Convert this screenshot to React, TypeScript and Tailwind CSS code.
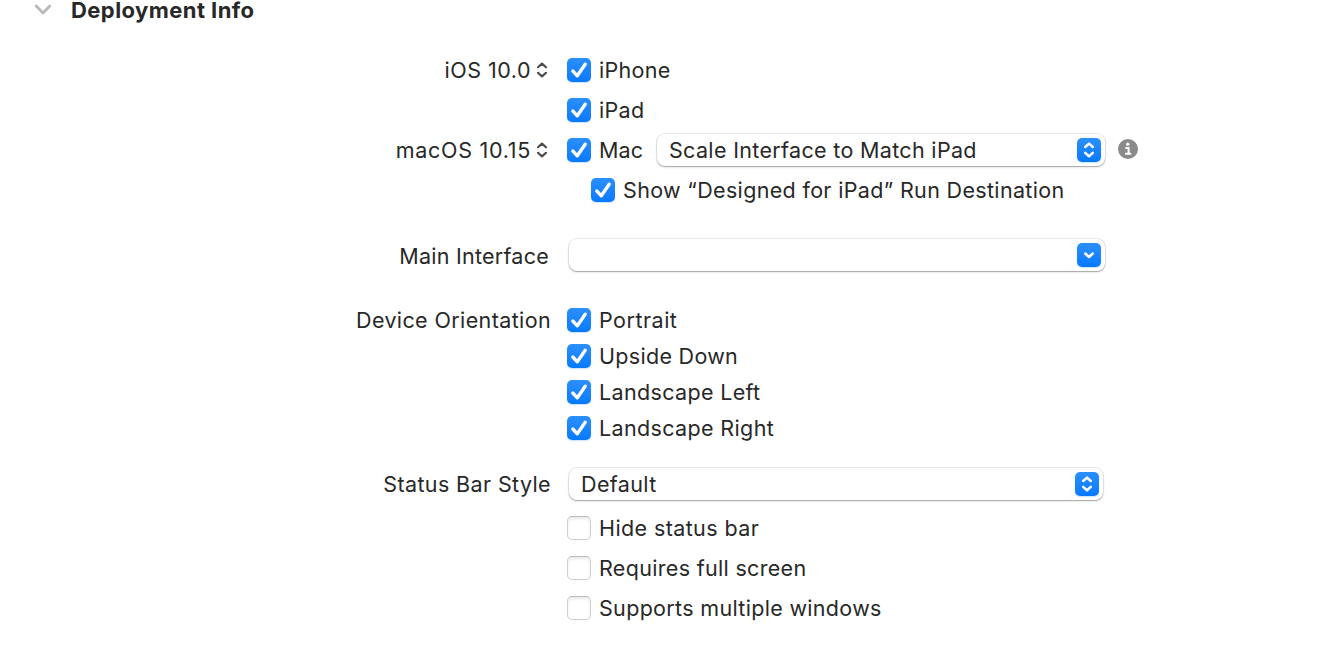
import { useState } from 'react';

function CheckBox({ initial }: { initial: boolean }) {
  const [on, setOn] = useState(initial);
  return (
    <button
      type="button"
      role="checkbox"
      aria-checked={on}
      onClick={() => setOn(!on)}
      className={
        on
          ? 'size-6 shrink-0 rounded-[5px] bg-linear-to-b from-[#2b90fd] to-[#0579ff] shadow-[0_1px_1px_rgba(0,122,255,0.22)]'
          : 'size-6 shrink-0 rounded-[5px] border border-[#d0d0d0] border-t-[#bcbcbc] bg-white shadow-[inset_0_2px_3px_rgba(0,0,0,0.09)]'
      }
    >
      {on && (
        <svg viewBox="0 0 24 24" className="block size-6" fill="none" stroke="white" strokeWidth="3.3" strokeLinecap="round" strokeLinejoin="round">
          <path d="M5.8 13 10.3 17.8 18.2 6.2" />
        </svg>
      )}
    </button>
  );
}

function Check({ label, tracking, on = true }: { label: string; tracking: string; on?: boolean }) {
  return (
    <div className="flex h-6 items-center gap-2">
      <CheckBox initial={on} />
      <span className={tracking}>{label}</span>
    </div>
  );
}

function Stepper() {
  return (
    <svg viewBox="0 0 12 16" className="h-4 w-3" fill="none" stroke="#4c4c4c" strokeWidth="2.2" strokeLinecap="round" strokeLinejoin="round">
      <path d="M2 5.2 6 1.6 10 5.2M2 10.8 6 14.4 10 10.8" />
    </svg>
  );
}

function BlueKnob({ single = false }: { single?: boolean }) {
  return (
    <span className="size-6 shrink-0 rounded-[5px] bg-linear-to-b from-[#2b90fd] to-[#0579ff] shadow-[0_1px_1px_rgba(0,122,255,0.22)]">
      <svg viewBox="0 0 24 24" className="block size-6" fill="none" stroke="white" strokeWidth="2.5" strokeLinecap="round" strokeLinejoin="round">
        <path d={single ? 'M8.3 10.5 12 14 15.7 10.5' : 'M8.2 9 12 5.6 15.8 9M8.2 14.9 12 18.3 15.8 14.9'} />
      </svg>
    </span>
  );
}

const popup =
  'flex items-center justify-between rounded-[8px] bg-white pl-3 pr-1 shadow-[0_0_0_1px_rgba(0,0,0,0.07),0_1px_1px_rgba(0,0,0,0.22),0_1px_3px_rgba(0,0,0,0.12)]';

export default function App() {
  return (
    <main className="h-[662px] w-[1328px] bg-white font-['Inter',sans-serif] text-[21.5px] leading-6 text-[#282828]">
      <header className="flex h-[58px] items-start pl-[34px]">
        <svg viewBox="0 0 18 12" className="mt-1 h-3 w-[18px]" fill="none" stroke="#b9b9b9" strokeWidth="2.8" strokeLinecap="round" strokeLinejoin="round">
          <path d="M2.2 2 9 9 15.8 2" />
        </svg>
        <h1 className="ml-[19px] text-[22px] leading-5 font-bold tracking-[0.43px]">Deployment Info</h1>
      </header>

      <section className="flex gap-4">
        <div className="flex w-[551px] flex-col items-end">
          <div className="flex h-6 items-center gap-[5px] pr-[3px]">
            <span className="tracking-[0.5px]">iOS 10.0</span>
            <Stepper />
          </div>
          <div className="mt-14 flex h-6 items-center gap-[5px] pr-[3px]">
            <span className="tracking-[0.72px]">macOS 10.15</span>
            <Stepper />
          </div>
        </div>
        <div className="flex flex-col gap-4">
          <Check label="iPhone" tracking="tracking-[0.3px]" />
          <Check label="iPad" tracking="tracking-[0.3px]" />
          <div className="flex h-6 items-center">
            <div className="w-[90px]">
              <Check label="Mac" tracking="tracking-[0.1px]" />
            </div>
            <div className={`${popup} h-8 w-[448px]`}>
              <span className="tracking-[0.33px]">Scale Interface to Match iPad</span>
              <BlueKnob />
            </div>
            <svg viewBox="0 0 20 20" className="-mt-[2px] ml-[13px] size-5">
              <circle cx="10" cy="10" r="10" fill="#8a8a8a" />
              <circle cx="9.8" cy="5.2" r="1.6" fill="white" />
              <path d="M7.4 8.9H10.6V14.4M7 14.7H13.2" fill="none" stroke="white" strokeWidth="2" />
            </svg>
          </div>
          <div className="pl-6">
            <Check label="Show “Designed for iPad” Run Destination" tracking="tracking-[0.34px]" />
          </div>
        </div>
      </section>

      <section className="mt-[37px] flex gap-[18px]">
        <span className="mt-[5px] flex w-[551px] justify-end pr-[2px] tracking-[0.25px]">Main Interface</span>
        <div className={`${popup} h-8 w-[536px]`}>
          <span />
          <BlueKnob single />
        </div>
      </section>

      <section className="mt-[37px] flex gap-4">
        <span className="flex w-[551px] justify-end tracking-[0.38px]">Device Orientation</span>
        <div className="flex flex-col gap-3">
          <Check label="Portrait" tracking="tracking-[0.5px]" />
          <Check label="Upside Down" tracking="tracking-[0.3px]" />
          <Check label="Landscape Left" tracking="tracking-[0.34px]" />
          <Check label="Landscape Right" tracking="tracking-[0.36px]" />
        </div>
      </section>

      <section className="mt-7 flex items-center gap-[18px]">
        <span className="flex w-[551px] justify-end tracking-[0.38px]">Status Bar Style</span>
        <div className={`${popup} h-8 w-[534px]`}>
          <span className="tracking-[0.36px]">Default</span>
          <BlueKnob />
        </div>
      </section>

      <section className="mt-4 flex flex-col gap-4 pl-[567px]">
        <Check label="Hide status bar" tracking="tracking-[0.4px]" on={false} />
        <Check label="Requires full screen" tracking="tracking-[0.32px]" on={false} />
        <Check label="Supports multiple windows" tracking="tracking-[0.32px]" on={false} />
      </section>
    </main>
  );
}
